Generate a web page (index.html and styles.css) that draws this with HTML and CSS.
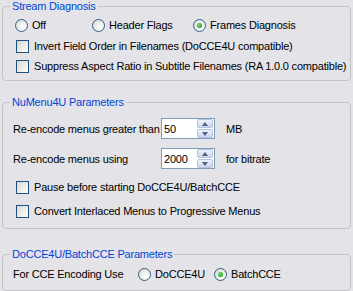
FILE: index.html
```html
<!DOCTYPE html>
<html>
<head>
<meta charset="utf-8">
<link rel="stylesheet" href="styles.css">
</head>
<body>
<div class="page">
  <fieldset class="group g1">
    <legend>Stream Diagnosis</legend>
    <div class="row radios r1">
      <span class="opt w-off"><span class="radio"></span>Off</span>
      <span class="opt w-hdr"><span class="radio"></span>Header Flags</span>
      <span class="opt"><span class="radio on"></span>Frames Diagnosis</span>
    </div>
    <div class="row r2"><span class="check"></span>Invert Field Order in Filenames (DoCCE4U compatible)</div>
    <div class="row r3"><span class="check"></span>Suppress Aspect Ratio in Subtitle Filenames (RA 1.0.0 compatible)</div>
  </fieldset>

  <fieldset class="group g2">
    <legend>NuMenu4U Parameters</legend>
    <div class="row num n1">
      <span class="lbl">Re-encode menus greater than</span>
      <span class="spin"><span class="val">50</span><span class="btns"><span class="btn up"></span><span class="btn down"></span></span></span>
      <span class="unit">MB</span>
    </div>
    <div class="row num n2">
      <span class="lbl">Re-encode menus using</span>
      <span class="spin"><span class="val">2000</span><span class="btns"><span class="btn up"></span><span class="btn down"></span></span></span>
      <span class="unit">for bitrate</span>
    </div>
    <div class="row c1"><span class="check"></span>Pause before starting DoCCE4U/BatchCCE</div>
    <div class="row c2"><span class="check"></span>Convert Interlaced Menus to Progressive Menus</div>
  </fieldset>

  <fieldset class="group g3">
    <legend>DoCCE4U/BatchCCE Parameters</legend>
    <div class="row e1">
      <span class="lbl2">For CCE Encoding Use</span>
      <span class="opt w-doc"><span class="radio"></span>DoCCE4U</span>
      <span class="opt"><span class="radio on"></span>BatchCCE</span>
    </div>
  </fieldset>
</div>
</body>
</html>
```
FILE: styles.css
```css
html, body {
  margin: 0;
  padding: 0;
  background: #e3e3e8;
}
body {
  font-family: "Liberation Sans", Arial, sans-serif;
  font-size: 11px;
  letter-spacing: -0.2px;
  color: #000;
  width: 353px;
  height: 291px;
  overflow: hidden;
}
.page {
  padding: 0 2px 0 2px;
}
.group {
  margin: 0;
  padding: 0 8px 0 9px;
  border: 1px solid #c3c3c8;
  border-radius: 4px;
  min-width: 0;
}
.group legend {
  color: #0046d5;
  padding: 0 2px;
  margin-left: -2px;
  line-height: 13px;
  font-size: 11px;
}
.row {
  display: flex;
  align-items: center;
  height: 20px;
  white-space: nowrap;
}
.opt {
  display: flex;
  align-items: center;
}
.w-off { width: 77px; }
.w-hdr { width: 101px; }
.w-doc { width: 76px; }

.radio {
  box-sizing: border-box;
  width: 13px;
  height: 13px;
  border-radius: 50%;
  border: 1px solid #2f5f8c;
  background: radial-gradient(circle at 65% 65%, #ffffff 0%, #f0f0ec 40%, #d4d4cc 100%);
  margin: 0 4px 0 3px;
  position: relative;
  flex: none;
}
.radio.on::after {
  content: "";
  position: absolute;
  left: 3px;
  top: 3px;
  width: 5px;
  height: 5px;
  border-radius: 50%;
  background: radial-gradient(circle at 40% 40%, #7ee07e 0%, #21a121 70%, #1a7a1a 100%);
}
.check {
  box-sizing: border-box;
  width: 13px;
  height: 13px;
  border: 1px solid #1c5180;
  background: linear-gradient(135deg, #d6d6cf 0%, #ecece7 50%, #ffffff 100%);
  margin: 0 5px 0 4px;
  flex: none;
}

.g1 .r1 { margin-top: 2px; }
.g1 .r2 { margin-top: 1px; }
.g1 .r3 { margin-top: 0px; }
.g1 { padding-bottom: 4px; }

.g2 { margin-top: 15px; padding-bottom: 7px; }
.num { height: 21px; }
.n1 { margin-top: 9px; }
.n2 { margin-top: 9px; }
.lbl { width: 148px; padding-left: 1px; }
.spin {
  box-sizing: border-box;
  width: 54px;
  height: 21px;
  border: 1px solid #7f9db9;
  background: #fff;
  display: flex;
  align-items: center;
  justify-content: space-between;
}
.val { padding-left: 2px; }
.btns {
  display: flex;
  flex-direction: column;
  margin-right: 1px;
  gap: 1px;
}
.btn {
  box-sizing: border-box;
  width: 16px;
  height: 9px;
  border: 1px solid #b4c4dc;
  border-radius: 2px;
  background: linear-gradient(#eef2fb, #c9d6ee);
  position: relative;
}
.btn::after {
  content: "";
  position: absolute;
  left: 4px;
  width: 0;
  height: 0;
  border-left: 3.5px solid transparent;
  border-right: 3.5px solid transparent;
}
.btn.up::after { top: 1.5px; border-bottom: 4px solid #4d6185; }
.btn.down::after { top: 2px; border-top: 4px solid #4d6185; }
.unit { margin-left: 11px; }

.c1 { margin-top: 8px; }
.c2 { margin-top: 4px; }

.g3 { margin-top: 19px; padding-bottom: 6px; }
.e1 { margin-top: 3px; }
.lbl2 { width: 122px; padding-left: 1px; }
```
